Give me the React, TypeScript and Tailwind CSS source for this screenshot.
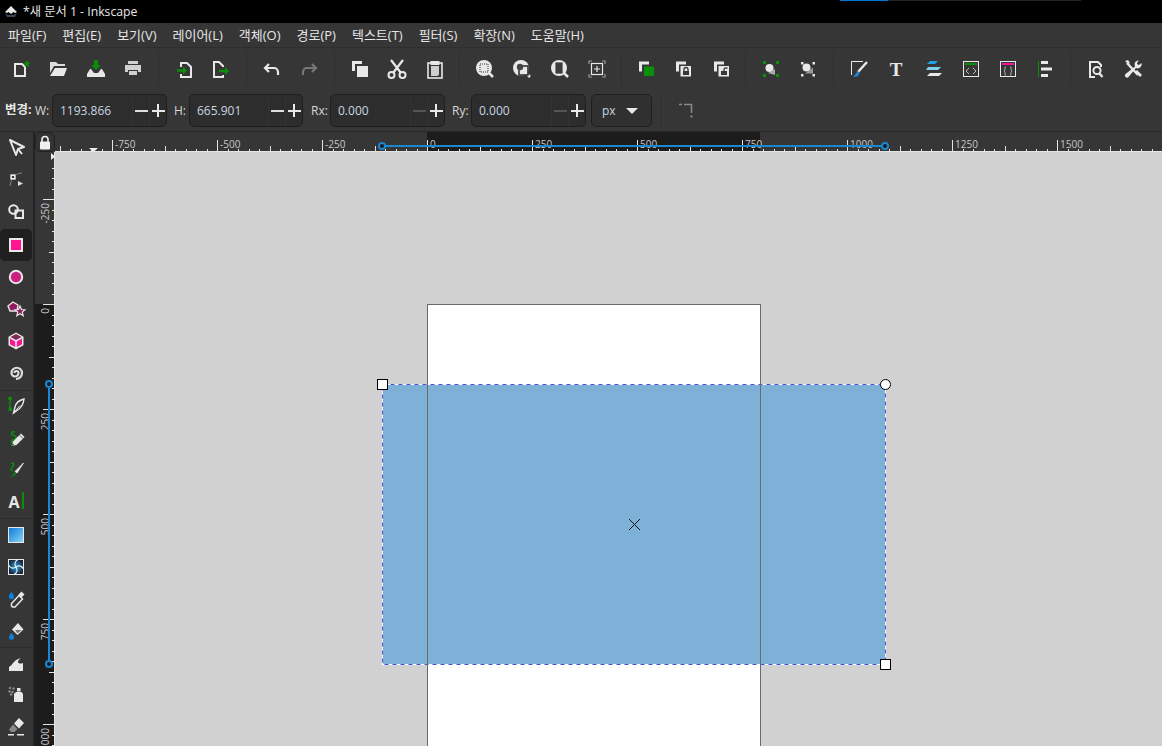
import React from "react";

const W = "#e8e8e8";
const G = "#0a8f0a";
const P = "#ff1493";
const B = "#1b87cf";
const BG = "#363636";

const I = ({ children, s = 24 }: { children: React.ReactNode; s?: number }) => (
  <svg width={s} height={s} viewBox="0 0 24 24" className="block shrink-0">
    {children}
  </svg>
);

const Stack = ({ front, lock }: { front: string; lock?: "c" | "o" }) => (
  <I>
    <path d="M5 4.500h10v3H8v7H5z" fill={W} />
    {front === G ? (
      <rect x="10" y="9.500" width="10" height="9.500" fill={G} />
    ) : (
      <rect x="9.500" y="9" width="10.500" height="10.500" fill={W} />
    )}
    {lock && <rect x="12" y="14" width="6" height="4" fill={BG} />}
    {lock === "c" && <path d="M13 14v-1.500a2 2 0 0 1 4 0V14" fill="none" stroke={BG} strokeWidth="1.300" />}
    {lock === "o" && <path d="M15 14v-1.500a2 2 0 0 1 3.500-1" fill="none" stroke={BG} strokeWidth="1.300" />}
  </I>
);

const Zoom = ({ children }: { children?: React.ReactNode }) => (
  <I>
    <path d="M16 16l4 4" stroke={W} strokeWidth="2.500" />
    <circle cx="11" cy="11" r="8" fill={W} />
    {children}
  </I>
);

type Item = React.ReactNode;

const top: { el?: Item; sep?: string }[] = [
  { el: (
    <I>
      <path d="M6 7h7l3 3v9H6z" fill="none" stroke={W} strokeWidth="2" />
      <path d="M18 3l1 2.600 2.600.2-2 1.700.7 2.600-2.300-1.500-2.300 1.500.7-2.600-2-1.700 2.600-.2z" fill={G} />
    </I>
  ) },
  { el: (
    <I>
      <path d="M4 5h6l2 2h7v2H8l-4 7z" fill="#dcdcdc" />
      <path d="M9 11h12l-3 8H4z" fill={W} />
    </I>
  ) },
  { el: (
    <I>
      <path d="M10 3h4v5h3l-5 5-5-5h3z" fill={G} />
      <path d="M6 12h1l3 4h4l3-4h1l3 5v3H3v-3z" fill={W} />
    </I>
  ) },
  { el: (
    <I>
      <path d="M7 4h10v3H7z" fill="#cfcfcf" />
      <path d="M4 8h16v7h-3v-2H7v2H4z" fill="#cfcfcf" />
      <path d="M8 14h8v4H8z" fill="#cfcfcf" />
    </I>
  ) },
  { sep: "w-[14px]" },
  { el: (
    <I>
      <path d="M11 6h4l4 4v10H9v-3M9 10V6h2" fill="none" stroke={W} strokeWidth="2" />
      <path d="M5 13.500h8" stroke={G} strokeWidth="2.400" />
      <path d="M11 9.500l4 4-4 4z" fill={G} />
    </I>
  ) },
  { el: (
    <I>
      <path d="M14 10V9l-4-4H5v15h9v-2" fill="none" stroke={W} strokeWidth="2" />
      <path d="M10 14h7" stroke={G} strokeWidth="2.400" />
      <path d="M16 10l4 4-4 4z" fill={G} />
    </I>
  ) },
  { sep: "w-[13.500px]" },
  { el: (
    <I>
      <path d="M9 7l-4 4 4 4" fill="none" stroke={W} strokeWidth="2.200" />
      <path d="M5 11h9a4 4 0 0 1 4 4v3" fill="none" stroke={W} strokeWidth="2.200" />
    </I>
  ) },
  { el: (
    <I>
      <path d="M15 7l4 4-4 4" fill="none" stroke="#777" strokeWidth="2.200" />
      <path d="M19 11h-9a4 4 0 0 0-4 4v3" fill="none" stroke="#777" strokeWidth="2.200" />
    </I>
  ) },
  { sep: "w-[13.500px]" },
  { el: (
    <I>
      <path d="M4 4h10v3H7v7H4z" fill={W} />
      <rect x="9" y="9" width="11" height="11" fill={W} />
    </I>
  ) },
  { el: (
    <I>
      <path d="M6 3l10 13M18 3L8 16" stroke={W} strokeWidth="2.200" />
      <circle cx="6.500" cy="18" r="3" fill="none" stroke={W} strokeWidth="2" />
      <circle cx="17.500" cy="18" r="3" fill="none" stroke={W} strokeWidth="2" />
    </I>
  ) },
  { el: (
    <I>
      <rect x="5" y="6" width="14" height="15" fill="none" stroke={W} strokeWidth="1.600" />
      <rect x="7.500" y="4" width="9" height="4" fill={W} />
      <path d="M8 9h8v9l-2 1H8z" fill="#cfcfcf" />
    </I>
  ) },
  { sep: "w-[13.250px]" },
  { el: (
    <Zoom>
      <rect x="7" y="7" width="8" height="8" fill={W} stroke="#333" strokeWidth="1" strokeDasharray="1 1" />
    </Zoom>
  ) },
  { el: (
    <Zoom>
      <rect x="9" y="9" width="9" height="9" fill={W} stroke="#333" strokeWidth="1.600" />
      <circle cx="10" cy="10" r="3.200" fill="#444" />
    </Zoom>
  ) },
  { el: (
    <Zoom>
      <rect x="7" y="5" width="8" height="12" fill="#3c3c3c" stroke={W} strokeWidth="0.800" />
    </Zoom>
  ) },
  { el: (
    <I>
      <path d="M4 7V4h3M17 4h3v3M20 17v3h-3M7 20H4v-3" fill="none" stroke="#999" strokeWidth="1.200" />
      <rect x="6.500" y="6.500" width="11" height="11" fill="none" stroke={W} strokeWidth="1.200" />
      <path d="M12 9v6M9 12h6" stroke={W} strokeWidth="1.200" />
    </I>
  ) },
  { sep: "w-[12px]" },
  { el: <Stack front={G} /> },
  { el: <Stack front={W} lock="c" /> },
  { el: <Stack front={W} lock="o" /> },
  { sep: "w-[13.250px]" },
  { el: (
    <I>
      <path d="M4 4h3v3H4zM17 4h3v3h-3zM4 17h3v3H4zM17 17h3v3h-3z" fill={G} />
      <circle cx="10.500" cy="11" r="4" fill={W} />
      <path d="M9 16l7-4v6z" fill="#aaa" />
    </I>
  ) },
  { el: (
    <I>
      <path d="M5 5h2.500v2.500H5zM16.500 5H19v2.500h-2.500zM5 17h2.500v2.500H5zM16.500 17H19v2.500h-2.500z" fill={W} />
      <circle cx="10.500" cy="10.500" r="4" fill={W} />
      <path d="M9 16.500l8-6v6z" fill="#999" />
    </I>
  ) },
  { sep: "w-[13.500px]" },
  { el: (
    <I>
      <path d="M16 4.500H4.500V18" fill="none" stroke={W} strokeWidth="1" />
      <path d="M20 5L11 15" stroke={W} strokeWidth="2.400" />
      <path d="M11 14l-5 6 4.500-.5 2.500-3.500z" fill="#1b87cf" />
    </I>
  ) },
  { el: (
    <I>
      <text x="12" y="19" textAnchor="middle" fontFamily="Liberation Serif, serif" fontWeight="700" fontSize="19" fill={W}>T</text>
    </I>
  ) },
  { el: (
    <I>
      <path d="M8 4h8l-3 3H5z" fill="#1e9fe6" />
      <path d="M6 10h13l-3 3H4z" fill="#7fcfee" />
      <path d="M8 16h12l-3 3H5z" fill={W} />
    </I>
  ) },
  { el: (
    <I>
      <rect x="4.500" y="4.500" width="15" height="15" fill="none" stroke={W} />
      <rect x="6" y="6" width="12" height="2" fill={G} />
      <path d="M10 11l-3 3 3 3M14 11l3 3-3 3" fill="none" stroke="#bbb" />
    </I>
  ) },
  { el: (
    <I>
      <rect x="4.500" y="4.500" width="15" height="15" fill="none" stroke={W} />
      <rect x="6" y="6" width="12" height="2" fill={P} />
      <path d="M10 10H9v3l-1 1 1 1v3h1M14 10h1v3l1 1-1 1v3h-1" fill="none" stroke="#aaa" />
    </I>
  ) },
  { el: (
    <I>
      <rect x="5" y="4" width="1" height="16" fill={G} />
      <path d="M8 4h7v3H8zM8 10.500h11v3H8zM8 17h7v3H8z" fill={W} />
    </I>
  ) },
  { sep: "w-[13.500px]" },
  { el: (
    <I>
      <path d="M11 20H6V5h8l3 3v2" fill="none" stroke={W} strokeWidth="2" />
      <circle cx="13" cy="13.500" r="3.600" fill="none" stroke={W} strokeWidth="2" />
      <path d="M15 16l3.500 4" stroke={W} strokeWidth="2.400" />
    </I>
  ) },
  { el: (
    <I>
      <path d="M6 6l11 12" stroke={W} strokeWidth="2.400" />
      <path d="M4 4l3-1 2 3-2 1z" fill={W} />
      <path d="M18 3.500a4 4 0 0 0-4 6L4.500 17a2 2 0 0 0 3 3L15 11a4 4 0 0 0 5.500-5L18 8l-2-1 .5-2z" fill={W} />
      <path d="M14 15l5 5 2-2-5-5z" fill={W} />
    </I>
  ) },
];

const tools: Item[] = [
  <I>
    <path d="M6 4l14 7-6 2-2 6z" fill="none" stroke={W} strokeWidth="2" strokeLinejoin="round" />
    <path d="M14 13l4 5" stroke={W} strokeWidth="2" />
  </I>,
  <I>
    <path d="M6 18C7 10 12 5 18 5" fill="none" stroke="#888" strokeWidth="1" />
    <rect x="6" y="6" width="6" height="6" fill={W} stroke="#333" strokeWidth="0.600" />
    <rect x="8" y="8" width="2" height="2" fill="#333" />
    <path d="M14 13l5 2.500-5 2.500z" fill="#ddd" />
  </I>,
  <I>
    <circle cx="9.500" cy="9.500" r="4.300" fill="none" stroke={W} strokeWidth="2" />
    <rect x="11.500" y="10.500" width="7.500" height="7.500" fill="none" stroke={W} strokeWidth="2" />
  </I>,
  <I>
    <rect x="6" y="6" width="12" height="12" fill={P} stroke={W} strokeWidth="2" />
  </I>,
  <I>
    <circle cx="12" cy="12" r="6.200" fill="#cc1f7f" stroke={W} strokeWidth="2" />
  </I>,
  <I>
    <path d="M4 9l5-4 5 3-1 6H6z" fill="#8f1c60" stroke={W} strokeWidth="1.400" />
    <path d="M16 9l1.500 3.500 3.500.3-2.700 2.300.9 3.600-3.200-2-3.200 2 .9-3.600L11 12.800l3.500-.3z" fill="#8f1c60" stroke={W} strokeWidth="1.200" />
  </I>,
  <I>
    <path d="M12 3.500l7.500 4.200v8.600L12 20.500l-7.500-4.200V7.700z" fill={W} />
    <path d="M12 5L17.500 8 12 11 6.500 8z" fill="#7d2a55" />
    <path d="M6 9.500l5.200 3v5.600L6 15.300z" fill={P} />
    <path d="M18 9.500l-5.200 3v5.600l5.200-2.800z" fill={P} />
  </I>,
  <I>
    <path d="M10.500 12a2 2 0 0 1 4 0 3.500 3.500 0 0 1-7 0 5 5 0 0 1 10.500 0 6 6 0 0 1-6 6" fill="none" stroke="#dcdcdc" strokeWidth="2.200" />
  </I>,
  <I>
    <path d="M6 5v10" stroke={G} strokeWidth="1.400" />
    <circle cx="6" cy="4.500" r="2" fill={G} />
    <rect x="4.500" y="13.500" width="3.500" height="3.500" fill={G} />
    <path d="M9.500 19l1.500-6c1-4 5-7 9-8-.5 5-3 9-7 11.500z" fill="none" stroke={W} strokeWidth="1.400" />
    <path d="M10 18.500l6-7" stroke={W} strokeWidth="1" />
  </I>,
  <I>
    <path d="M11 6C6 5 7 9 10 9.500s3 3 0 4-3 2-2 3" fill="none" stroke={G} strokeWidth="1.500" />
    <path d="M7.500 20l1.500-4.500L17 7.500l3.500 3.500-8 8z" fill={W} />
    <path d="M7.500 20l1-3 2 2z" fill={G} />
    <path d="M15.500 9l3.500 3.500" stroke={BG} strokeWidth="0.800" />
  </I>,
  <I>
    <path d="M7 5c4 0 3 3 1 4.500S7 12 9 13" fill="none" stroke={G} strokeWidth="1.500" />
    <path d="M11 13.500L19.500 5 13 15z" fill={W} stroke={W} strokeWidth="0.800" />
    <path d="M11 14l2 1.500-6.500 4.500z" fill={G} />
  </I>,
  <I>
    <text x="10" y="18" textAnchor="middle" fontFamily="Open Sans, sans-serif" fontWeight="700" fontSize="16" fill={W}>A</text>
    <rect x="18" y="2" width="2" height="17" fill={G} />
  </I>,
  <I>
    <defs>
      <linearGradient id="grad" x1="0" y1="0" x2="1" y2="1">
        <stop offset="0" stopColor="#0a78dc" />
        <stop offset="1" stopColor="#8fd6f2" />
      </linearGradient>
    </defs>
    <rect x="4.500" y="4.500" width="15" height="15" fill="url(#grad)" stroke={W} />
  </I>,
  <I>
    <defs>
      <radialGradient id="mesh">
        <stop offset="0" stopColor="#26a8f0" />
        <stop offset="1" stopColor="#1a2a3a" />
      </radialGradient>
    </defs>
    <rect x="4.500" y="4.500" width="15" height="15" fill="url(#mesh)" stroke={W} />
    <path d="M12 12c-2-3-1-6 2-7.500M12 12c3-2 6-1 7.500 2M12 12c2 3 1 6-2 7.500M12 12c-3 2-6 1-7.500-2" fill="none" stroke={W} strokeWidth="1.200" />
  </I>,
  <I>
    <path d="M7.500 5c1.500 2 2.500 3.200 2.500 4.700a2.500 2.500 0 0 1-5 0C5 8.200 6 7 7.500 5z" fill="#0a84e0" />
    <path d="M15 8.500l3.500 3.500-7.500 8H8.500l-1-1v-2.500z" fill="none" stroke={W} strokeWidth="1.500" />
    <path d="M17.500 4.500l3 3-3 3-3-3z" fill={W} />
  </I>,
  <I>
    <path d="M14 4l5.500 6.500-6 5.500L8 10.500z" fill={W} />
    <path d="M11 11h6.500l-4 3.500z" fill="#777" />
    <path d="M7.500 14c1.500 2 2.500 3 2.500 4.300a2.500 2.500 0 0 1-5 0C5 17 6 16 7.500 14z" fill="#0a84e0" />
  </I>,
  <I>
    <path d="M5 19v-4c2-1 3-3 5-5s4-3.500 7-3.500c-2 1-3 2-3 3.500s2.500 2 5 1V19z" fill={W} />
  </I>,
  <I>
    <circle cx="6" cy="5" r="1.200" fill="#888" />
    <circle cx="9.500" cy="5.500" r="1.200" fill="#888" />
    <circle cx="5.500" cy="8.500" r="1.200" fill="#888" />
    <circle cx="8.500" cy="9" r="1.200" fill="#888" />
    <circle cx="7" cy="11.500" r="1.200" fill="#888" />
    <rect x="13" y="5" width="3.500" height="3.500" fill={W} />
    <path d="M12 9h5.500l1.500 2v8h-9v-8z" fill={W} />
  </I>,
  <I>
    <path d="M15 3l5 5-5 5.500-5-5z" fill={W} />
    <path d="M9 9.500l4.500 4.500-3 3H7l-2-2.500z" fill="#888" />
    <path d="M4 19h6v1.500H4zM13 19h7v1.500h-7z" fill={W} />
  </I>,
];

const menus = ["파일(F)", "편집(E)", "보기(V)", "레이어(L)", "객체(O)", "경로(P)", "텍스트(T)", "필터(S)", "확장(N)", "도움말(H)"];

const Spin = ({ value, w, dim }: { value: string; w: string; dim?: boolean }) => (
  <div className={`${w} h-[33px] flex items-center rounded-[5px] border border-[#1f1f1f] bg-[#2d2d2d]`}>
    <span className="flex-1 pl-[7px] text-[12px] text-[#c9d6e2]">{value}</span>
    <div className="flex h-full w-[17px] items-center justify-center border-l border-[#333]">
      <div className={`h-[2px] w-[13px] ${dim ? "bg-[#555]" : "bg-[#e0e0e0]"}`} />
    </div>
    <div className="relative flex h-full w-[17px] items-center justify-center border-l border-[#333]">
      <div className="h-[2px] w-[13px] bg-[#e8e8e8]" />
      <div className="absolute h-[13px] w-[2px] bg-[#e8e8e8]" />
    </div>
  </div>
);

const range = (a: number, b: number) => Array.from({ length: b - a + 1 }, (_, i) => a + i);

const HRuler = () => {
  const x0 = 372;
  return (
    <svg width="1107" height="20" className="block">
      <rect x="0" y="0" width="1107" height="20" fill="#363636" />
      <rect x={x0} y="0" width="333" height="20" fill="#1c1c1c" />
      {range(-36, 70).map((k) => {
        const x = Math.round(x0 + k * 10.5) + 0.5;
        const len = k % 10 === 0 ? 12 : k % 5 === 0 ? 6 : 3;
        return <line key={k} x1={x} x2={x} y1={20 - len} y2={20} stroke="#e4e4e4" />;
      })}
      {range(-3, 6).map((n) => (
        <text key={n} x={x0 + n * 105 + 3} y="16" fontSize="10" fill="#c8c8c8" fontFamily="Open Sans, sans-serif">
          {n * 250}
        </text>
      ))}
      <path d="M34 16h9l-4.500 4z" fill="#f0f0f0" />
      <line x1="327" x2="830" y1="14" y2="14" stroke={B} strokeWidth="2" />
      <circle cx="327" cy="14" r="3" fill="#1c1c1c" stroke={B} strokeWidth="2" />
      <circle cx="830" cy="14" r="3" fill="#1c1c1c" stroke={B} strokeWidth="2" />
      <line x1="0" x2="1107" y1="19.500" y2="19.500" stroke="#e4e4e4" />
    </svg>
  );
};

const VRuler = () => {
  const y0 = 152;
  return (
    <svg width="20" height="594" className="block shrink-0">
      <rect x="0" y="0" width="20" height="594" fill="#363636" />
      <rect x="0" y={y0} width="20" height="442" fill="#1c1c1c" />
      {range(-14, 43).map((k) => {
        const y = Math.round(y0 + k * 10.5) + 0.5;
        const len = k % 10 === 0 ? 12 : k % 5 === 0 ? 6 : 3;
        return <line key={k} x1={20 - len} x2="20" y1={y} y2={y} stroke="#e4e4e4" />;
      })}
      {range(-1, 4).map((n) => {
        const y = y0 + n * 105 + 4;
        return (
          <text key={n} x="14" y={y} fontSize="10" fill="#c8c8c8" textAnchor="end" transform={`rotate(-90 14 ${y})`} fontFamily="Open Sans, sans-serif">
            {n * 250}
          </text>
        );
      })}
      <path d="M16 1l4 3.500-4 3.500z" fill="#f0f0f0" />
      <line x1="14" x2="14" y1="232" y2="512" stroke={B} strokeWidth="2" />
      <circle cx="14" cy="232" r="3" fill="#1c1c1c" stroke={B} strokeWidth="2" />
      <circle cx="14" cy="512" r="3" fill="#1c1c1c" stroke={B} strokeWidth="2" />
      <line x1="19.500" x2="19.500" y1="0" y2="594" stroke="#e4e4e4" />
    </svg>
  );
};

export default function App() {
  return (
    <div
      className="flex h-[746px] w-[1162px] flex-col overflow-hidden bg-[#363636] text-[#e6e6e6]"
      style={{ fontFamily: '"Open Sans","Noto Sans CJK KR",sans-serif' }}
    >
      {/* Title bar */}
      <div className="relative flex h-[23px] shrink-0 items-center bg-black pl-[3px]">
        <svg width="16" height="14" viewBox="0 0 16 14" className="block">
          <path d="M8 1l6 6-2 1-1.500-1L8 9 5.500 7 4 8 2 7z" fill="#e8e8e8" />
          <path d="M2 8l3 2h6l3-2-2 4H4z" fill="#3a4a5a" />
        </svg>
        <span className="ml-[4px] pt-[1px] text-[12.250px] text-[#e8e8e8]">*새 문서 1 - Inkscape</span>
        <div className="absolute left-[840px] top-0 flex h-px w-[241px] bg-[#222]">
          <div className="h-px w-[48px] bg-[#0078d7]" />
        </div>
      </div>

      {/* Menu */}
      <div className="flex h-[25px] shrink-0 items-center border-b border-[#2e2e2e] pt-[2px] text-[13px]">
        {menus.map((m) => (
          <span key={m} className="px-2 whitespace-nowrap">
            {m}
          </span>
        ))}
      </div>

      {/* Commands */}
      <div className="flex h-[42px] shrink-0 items-center pl-[2.375px]">
        {top.map((t, i) =>
          t.sep ? (
            <div key={i} className={`flex h-[34px] justify-center ${t.sep}`}>
              <div className="h-full w-px bg-[#2f2f2f]" />
            </div>
          ) : (
            <div key={i} className="flex h-[34px] w-[37.250px] items-center justify-center">
              {t.el}
            </div>
          ),
        )}
      </div>

      {/* Tool controls */}
      <div className="flex h-[42px] shrink-0 items-center border-b border-[#2a2a2a] text-[12px]">
        <span className="ml-[5px] w-[27px] whitespace-nowrap text-[12.500px] font-bold">변경:</span>
        <span className="ml-[3px] w-[17px] text-[#d8d8d8]">W:</span>
        <Spin value="1193.866" w="w-[115px]" />
        <span className="ml-[7px] w-[15px] text-[#d8d8d8]">H:</span>
        <Spin value="665.901" w="w-[114px]" />
        <span className="ml-[8px] w-[19px] text-[#d8d8d8]">Rx:</span>
        <Spin value="0.000" w="w-[115px]" dim />
        <span className="ml-[7px] w-[19px] text-[#d8d8d8]">Ry:</span>
        <Spin value="0.000" w="w-[115px]" dim />
        <div className="ml-[5px] flex h-[33px] w-[61px] items-center justify-between rounded-[5px] border border-[#1f1f1f] bg-[#303030] pl-[10px] pr-[13px]">
          <span className="text-[12px] text-[#c9d6e2]">px</span>
          <div className="h-0 w-0 border-x-[6px] border-t-[6px] border-x-transparent border-t-[#e8e8e8]" />
        </div>
        <div className="ml-[8px] h-[34px] w-px bg-[#2f2f2f]" />
        <svg width="16" height="16" viewBox="0 0 16 16" className="ml-[17px] block">
          <path d="M1 1.500h3M6 1.500h7.500V10" fill="none" stroke="#8a8a8a" strokeWidth="1.500" />
          <rect x="12.500" y="12.500" width="2" height="2" fill="#8a8a8a" />
        </svg>
      </div>

      {/* Workspace */}
      <div className="flex min-h-0 flex-1">
        <div className="w-[33px] shrink-0 pr-px">
          {tools.map((t, i) => (
            <div
              key={i}
              className={`flex h-[32.200px] items-center justify-center ${i === 3 ? "rounded-[5px] bg-[#1f1f1f]" : ""} ${
                i === 8 || i === 12 || i === 16 ? "border-t border-[#2c2c2c]" : ""
              }`}
            >
              {t}
            </div>
          ))}
        </div>
        <div className="w-[2px] shrink-0 bg-[#222]" />
        <div className="flex min-w-0 flex-1 flex-col">
          <div className="flex h-[20px] shrink-0">
            <div className="flex w-[20px] shrink-0 items-center justify-center rounded-[5px] border border-[#222] bg-[#333]">
              <svg width="12" height="15" viewBox="0 0 12 15" className="block">
                <path d="M3 7V4.500a3 3 0 0 1 6 0V7" fill="none" stroke="#f0f0f0" strokeWidth="1.600" />
                <rect x="1" y="6.500" width="10" height="8" rx="1" fill="#f0f0f0" />
              </svg>
            </div>
            <HRuler />
          </div>
          <div className="flex min-h-0 flex-1">
            <VRuler />
            <div className="relative min-w-0 flex-1 overflow-hidden bg-[#d1d1d1]">
              <div className="absolute left-[372px] top-[152px] h-[460px] w-[334px] bg-white" />
              <svg width="513" height="290" className="absolute left-[322px] top-[227px] block">
                <rect x="5.500" y="5.500" width="503" height="280" fill="#7db1d8" stroke="#ffffff" />
                <rect x="5.500" y="5.500" width="503" height="280" fill="none" stroke="#4a50d8" strokeDasharray="4 4" />
              </svg>
              <div className="absolute left-[372px] top-[152px] h-[460px] w-[334px] border border-[#6a6a6a]" />
              <div className="absolute left-[322px] top-[227px] h-[11px] w-[11px] border border-black bg-white" />
              <div className="absolute left-[825px] top-[227px] h-[11px] w-[11px] rounded-full border border-black bg-white" />
              <div className="absolute left-[825px] top-[507px] h-[11px] w-[11px] border border-black bg-white" />
              <svg width="13" height="13" viewBox="0 0 13 13" className="absolute left-[573px] top-[366px] block">
                <path d="M1 1l11 11M12 1L1 12" stroke="#111" strokeWidth="1" />
              </svg>
            </div>
          </div>
        </div>
      </div>
    </div>
  );
}
